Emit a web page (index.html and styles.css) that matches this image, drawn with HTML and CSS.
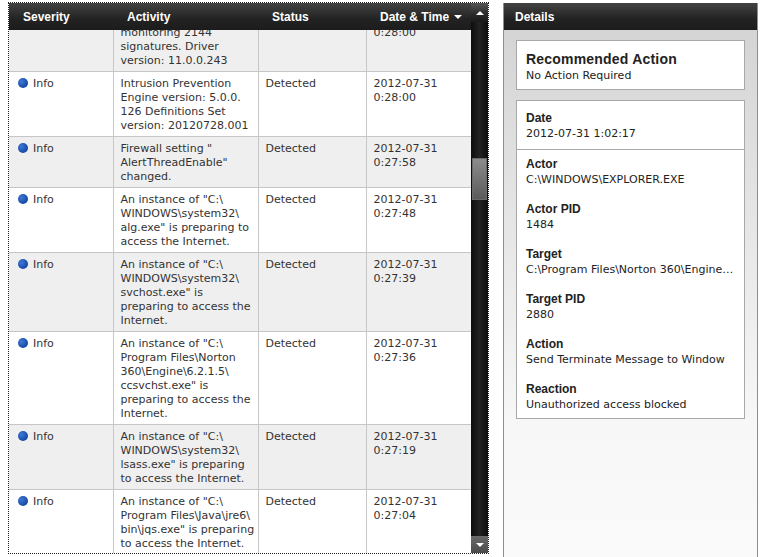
FILE: index.html
```html
<!DOCTYPE html>
<html lang="en">

<head>
    <meta charset="UTF-8">
    <title>Security History</title>
    <link rel="stylesheet" href="styles.css">
</head>

<body>
    <main class="page">
        <!-- Event list -->
        <section class="events" aria-label="Security history">
            <div class="grid">
                <div class="grid-head">
                    <span class="col-sev">Severity</span>
                    <span class="col-act">Activity</span>
                    <span class="col-status">Status</span>
                    <span class="col-date">Date &amp; Time <i class="sort-arrow"></i></span>
                </div>
                <div class="grid-body">
                    <table class="event-table">
                        <colgroup>
                            <col class="w-sev">
                            <col class="w-act">
                            <col class="w-status">
                            <col class="w-date">
                        </colgroup>
                        <!-- first row is scrolled partly out of view -->
                        <tr class="row-partial">
                            <td></td>
                            <td>monitoring 2144<br>signatures. Driver<br>version: 11.0.0.243</td>
                            <td></td>
                            <td>0:28:00</td>
                        </tr>
                        <tr>
                            <td><span class="dot"></span>Info</td>
                            <td>Intrusion Prevention<br>Engine version: 5.0.0.<br>126 Definitions Set<br>version: 20120728.001</td>
                            <td>Detected</td>
                            <td>2012-07-31 0:28:00</td>
                        </tr>
                        <tr>
                            <td><span class="dot"></span>Info</td>
                            <td>Firewall setting "<br>AlertThreadEnable"<br>changed.</td>
                            <td>Detected</td>
                            <td>2012-07-31 0:27:58</td>
                        </tr>
                        <tr>
                            <td><span class="dot"></span>Info</td>
                            <td>An instance of "C:\<br>WINDOWS\system32\<br>alg.exe" is preparing to<br>access the Internet.</td>
                            <td>Detected</td>
                            <td>2012-07-31 0:27:48</td>
                        </tr>
                        <tr>
                            <td><span class="dot"></span>Info</td>
                            <td>An instance of "C:\<br>WINDOWS\system32\<br>svchost.exe" is<br>preparing to access the<br>Internet.</td>
                            <td>Detected</td>
                            <td>2012-07-31 0:27:39</td>
                        </tr>
                        <tr>
                            <td><span class="dot"></span>Info</td>
                            <td>An instance of "C:\<br>Program Files\Norton<br>360\Engine\6.2.1.5\<br>ccsvchst.exe" is<br>preparing to access the<br>Internet.</td>
                            <td>Detected</td>
                            <td>2012-07-31 0:27:36</td>
                        </tr>
                        <tr>
                            <td><span class="dot"></span>Info</td>
                            <td>An instance of "C:\<br>WINDOWS\system32\<br>lsass.exe" is preparing<br>to access the Internet.</td>
                            <td>Detected</td>
                            <td>2012-07-31 0:27:19</td>
                        </tr>
                        <tr>
                            <td><span class="dot"></span>Info</td>
                            <td>An instance of "C:\<br>Program Files\Java\jre6\<br>bin\jqs.exe" is preparing<br>to access the Internet.</td>
                            <td>Detected</td>
                            <td>2012-07-31 0:27:04</td>
                        </tr>
                    </table>
                </div>
            </div>
            <div class="scrollbar">
                <div class="scroll-btn scroll-up"></div>
                <div class="scroll-track">
                    <div class="scroll-thumb"></div>
                </div>
                <div class="scroll-btn scroll-down"></div>
            </div>
        </section>

        <!-- Details pane -->
        <aside class="details" aria-labelledby="details-title">
            <div class="details-head" id="details-title">Details</div>
            <div class="details-body">
                <div class="card card-main">
                    <h2 class="card-title">Recommended Action</h2>
                    <p class="value">No Action Required</p>
                </div>
                <div class="card">
                    <div class="field-date">
                        <h3 class="label">Date</h3>
                        <p class="value">2012-07-31 1:02:17</p>
                    </div>
                    <div class="field-list">
                        <div class="field">
                            <h3 class="label">Actor</h3>
                            <p class="value">C:\WINDOWS\EXPLORER.EXE</p>
                        </div>
                        <div class="field">
                            <h3 class="label">Actor PID</h3>
                            <p class="value">1484</p>
                        </div>
                        <div class="field">
                            <h3 class="label">Target</h3>
                            <p class="value">C:\Program Files\Norton 360\Engine\6.2.1.5\ccsvchst.exe</p>
                        </div>
                        <div class="field">
                            <h3 class="label">Target PID</h3>
                            <p class="value">2880</p>
                        </div>
                        <div class="field">
                            <h3 class="label">Action</h3>
                            <p class="value">Send Terminate Message to Window</p>
                        </div>
                        <div class="field">
                            <h3 class="label">Reaction</h3>
                            <p class="value">Unauthorized access blocked</p>
                        </div>
                    </div>
                </div>
            </div>
        </aside>
    </main>
</body>

</html>
```

FILE: styles.css
```css
* {
    margin: 0;
    padding: 0;
    box-sizing: border-box;
}

body {
    background-color: #fff;
    font-family: 'DejaVu Sans', Verdana, sans-serif;
    font-size: 11px;
    color: #333;
    overflow: hidden;
}

.page {
    display: flex;
    align-items: flex-start;
    gap: 15px;
    padding: 3px 0 0 9px;
    height: 557px;
}

/* event list */

.events {
    display: flex;
    width: 479px;
    height: 550px;
    outline: 1px dotted #222;
}

.grid {
    width: 462px;
    display: flex;
    flex-direction: column;
}

.grid-head {
    display: flex;
    align-items: center;
    height: 27px;
    flex-shrink: 0;
    position: relative;
    z-index: 1;
    background: linear-gradient(#434343, #222 60%, #1c1c1c);
    color: #fff;
    font: bold 12px 'Liberation Sans', Arial, sans-serif;
}

.grid-head span {
    padding-left: 14px;
}

.col-sev {
    width: 104px;
}

.col-act {
    width: 145px;
}

.col-status {
    width: 108px;
}

.col-date {
    width: 105px;
    display: flex;
    align-items: center;
}

.sort-arrow {
    width: 0;
    height: 0;
    margin-left: 5px;
    border-left: 4px solid transparent;
    border-right: 4px solid transparent;
    border-top: 4px solid #fff;
}

.grid-body {
    flex: 1;
    overflow: hidden;
}

.event-table {
    width: 462px;
    table-layout: fixed;
    border-collapse: collapse;
    margin-top: -23px;
}

.w-sev {
    width: 104px;
}

.w-act {
    width: 145px;
}

.w-status {
    width: 108px;
}

.w-date {
    width: 105px;
}

.event-table td {
    vertical-align: top;
    padding: 5px 4px 3px 7px;
    line-height: 14px;
    white-space: nowrap;
    border-right: 1px solid #c6c6c6;
    border-bottom: 1px solid #c6c6c6;
    background-color: #fff;
}

.event-table td:first-child {
    padding-left: 9px;
}

.event-table td:last-child {
    border-right: none;
    white-space: normal;
}

.event-table tr:nth-child(odd) td {
    background-color: #efefef;
}

.event-table .row-partial td {
    padding-top: 19px;
}

.dot {
    display: inline-block;
    width: 10px;
    height: 10px;
    margin-right: 5px;
    border-radius: 50%;
    vertical-align: -1px;
    background: radial-gradient(circle at 35% 35%, #3f78d4, #1549a6 70%);
}

/* scrollbar */

.scrollbar {
    width: 17px;
    display: flex;
    flex-direction: column;
    background: linear-gradient(90deg, #1a1a1a, #333 50%, #161616);
}

.scroll-btn {
    height: 19px;
    display: flex;
    justify-content: center;
    align-items: center;
    flex-shrink: 0;
}

.scroll-up {
    background: linear-gradient(#555, #2a2a2a 60%, #1a1a1a);
}

.scroll-up::before {
    content: '';
    border-left: 4px solid transparent;
    border-right: 4px solid transparent;
    border-bottom: 4px solid #fff;
}

.scroll-down {
    height: 17px;
    background: linear-gradient(#6a6a6a, #4a4a4a);
}

.scroll-down::before {
    content: '';
    border-left: 4px solid transparent;
    border-right: 4px solid transparent;
    border-top: 4px solid #fff;
}

.scroll-track {
    flex: 1;
    padding: 0 1px;
    background: linear-gradient(90deg, #0d0d0d, #232323 50%, #0d0d0d);
}

.scroll-thumb {
    height: 42px;
    margin-top: 136px;
    border: 1px solid #6a6a6a;
    background: linear-gradient(#8c8c8c, #5a5a5a);
}

/* details pane */

.details {
    width: 255px;
    height: 556px;
    display: flex;
    flex-direction: column;
    border-left: 1px solid #8e8e8e;
    border-right: 1px solid #8e8e8e;
    background: linear-gradient(#d2d2d2, #f7f7f7 75%, #fafafa);
}

.details-head {
    height: 27px;
    display: flex;
    align-items: center;
    padding-left: 11px;
    background: linear-gradient(#434343, #222 60%, #1c1c1c);
    color: #fff;
    font: bold 12px 'Liberation Sans', Arial, sans-serif;
}

.details-body {
    display: flex;
    flex-direction: column;
    gap: 10px;
    padding: 10px 12px;
}

.card {
    background-color: #fff;
    border: 1px solid #a8a8a8;
}

.card-main {
    padding: 10px 9px 6px;
}

.card-title {
    font: bold 14px/17px 'Liberation Sans', Arial, sans-serif;
    letter-spacing: 0.2px;
    color: #222;
}

.label {
    font: bold 12px/15px 'Liberation Sans', Arial, sans-serif;
    color: #222;
}

.value {
    line-height: 15px;
    color: #222;
    white-space: nowrap;
    overflow: hidden;
    text-overflow: ellipsis;
}

.field-date {
    padding: 10px 9px 8px;
    border-bottom: 1px solid #a8a8a8;
}

.field-list {
    display: flex;
    flex-direction: column;
    gap: 15px;
    padding: 7px 9px 6px;
}
```
